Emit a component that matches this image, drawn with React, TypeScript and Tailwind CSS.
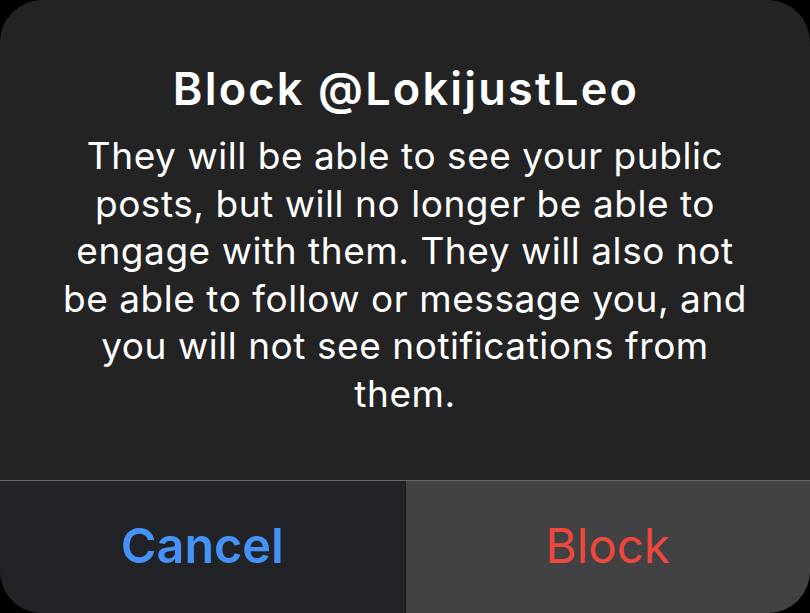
export default function App() {
  const lines = [
    "They will be able to see your public",
    "posts, but will no longer be able to",
    "engage with them. They will also not",
    "be able to follow or message you, and",
    "you will not see notifications from",
    "them.",
  ];

  return (
    <main className="h-[613px] w-[810px] overflow-hidden bg-black font-['Inter','Liberation_Sans',sans-serif]">
      <div className="flex h-full flex-col overflow-hidden rounded-[42px] bg-[#232324]">
        {/* message */}
        <section className="flex h-[480px] flex-col items-center pt-[63px] text-white">
          <h1 className="pl-[2px] text-[45px] font-semibold leading-[52px] tracking-[2.2px]">
            Block @LokijustLeo
          </h1>
          <p className="mt-[17px] text-center text-[37px] leading-[47.6px] tracking-[0.55px]">
            {lines.map((l) => (
              <span key={l} className="block whitespace-nowrap">
                {l}
              </span>
            ))}
          </p>
        </section>

        <div className="h-px bg-[#646466]" />

        {/* actions */}
        <section className="flex flex-1">
          <button className="flex flex-1 items-center justify-center border-r border-[#1a1a1b] bg-[#222326] pb-[2px] text-[48.5px] font-semibold text-[#4593f8]">
            Cancel
          </button>
          <button className="flex flex-1 items-center justify-center bg-[#424244] pb-[2px] text-[47.5px] text-[#ee473b]">
            Block
          </button>
        </section>
      </div>
    </main>
  );
}
